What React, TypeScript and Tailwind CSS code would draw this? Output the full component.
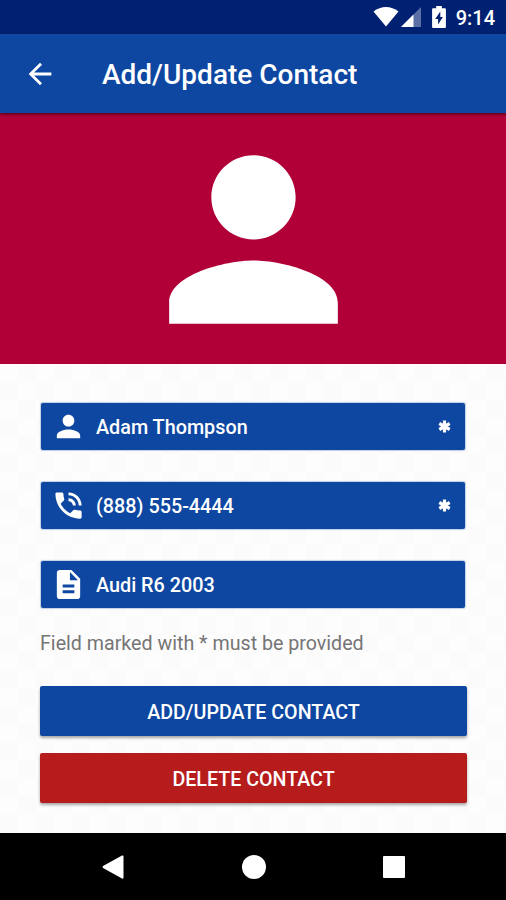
import React, { useState } from "react";
import clsx from "clsx";

const PERSON =
  "M12 12c2.21 0 4-1.79 4-4s-1.79-4-4-4-4 1.79-4 4 1.79 4 4 4zm0 2c-2.67 0-8 1.34-8 4v2h16v-2c0-2.66-5.33-4-8-4z";
const PHONE =
  "M20 15.5c-1.25 0-2.45-.2-3.57-.57-.1-.03-.21-.05-.31-.05-.26 0-.51.1-.71.29l-2.2 2.2c-2.83-1.44-5.15-3.75-6.59-6.59l2.2-2.21c.28-.26.36-.65.25-1C8.7 6.45 8.5 5.25 8.5 4c0-.55-.45-1-1-1H4c-.55 0-1 .45-1 1 0 9.39 7.61 17 17 17 .55 0 1-.45 1-1v-3.5c0-.55-.45-1-1-1zM19 12h2c0-4.97-4.03-9-9-9v2c3.87 0 7 3.13 7 7zm-4 0h2c0-2.76-2.24-5-5-5v2c1.66 0 3 1.34 3 3z";
const DOCUMENT =
  "M14 2H6c-1.1 0-1.99.9-1.99 2L4 20c0 1.1.89 2 1.99 2H18c1.1 0 2-.9 2-2V8l-6-6zm2 16H8v-2h8v2zm0-4H8v-2h8v2zm-3-5V3.5L18.5 9H13z";
const ARROW = "M20 11H7.83l5.59-5.59L12 4l-8 8 8 8 1.41-1.41L7.83 13H20v-2z";

type IconProps = { path: string; className?: string };

const Icon = ({ path, className }: IconProps) => (
  <svg viewBox="0 0 24 24" fill="currentColor" className={className}>
    <path d={path} />
  </svg>
);

const StatusBar = () => (
  <div className="flex h-[34px] items-center justify-end bg-[#002171] pr-[11px] text-white">
    <svg width="26" height="20" viewBox="0 0 26 20" fill="currentColor">
      <path d="M0.5 4.6C8 -1.4 18 -1.4 25.5 4.6L13 19.5z" />
    </svg>
    <svg width="20" height="20" viewBox="0 0 20 20" className="ml-[2px]">
      <path d="M20 0V20H0z" fill="#5a6fa6" />
      <path d="M12.5 7.5V20H0z" fill="#fff" />
    </svg>
    <svg width="14" height="22" viewBox="0 0 14 22" className="ml-[11px]">
      <path
        d="M4.2 0h5.6v2.3H13c.5 0 .9.4.9.9V21c0 .5-.4.9-.9.9H1c-.5 0-.9-.4-.9-.9V3.200c0-.5.4-.9.9-.9h3.200z"
        fill="#fff"
      />
      <path d="M8.300 5.500L3.200 13H6.100V18.600L10.900 10.900H8.300z" fill="#002171" />
    </svg>
    <span className="ml-[10px] pt-[2px] text-[20px] leading-none font-medium">9:14</span>
  </div>
);

const Header = () => (
  <header className="relative z-10 flex h-[79px] items-center bg-[#0d47a1] pl-[23px] text-white shadow-[0_1px_3px_rgba(0,0,0,0.6)]">
    <button aria-label="Back">
      <Icon path={ARROW} className="size-[34px]" />
    </button>
    <h1 className="ml-[45px] pt-[3px] text-[28px] leading-[34px] font-medium whitespace-nowrap">
      Add/Update Contact
    </h1>
  </header>
);

type FieldProps = {
  icon: string;
  value: string;
  onChange: (value: string) => void;
  required?: boolean;
};

const Field = ({ icon, value, onChange, required }: FieldProps) => (
  <label className="flex h-[47px] items-center rounded-[2px] bg-[#0d47a1] pr-[14px] pl-[9.500px] text-white shadow-[0_0_1px_1px_rgba(13,71,161,0.25)]">
    <Icon path={icon} className="size-[35px] shrink-0" />
    <input
      value={value}
      onChange={(e) => onChange(e.target.value)}
      className="ml-[10.500px] min-w-0 flex-1 bg-transparent pt-[2px] text-[19.8px] font-medium outline-none"
    />
    {required && (
      <svg
        width="13"
        height="13"
        viewBox="0 0 13 13"
        stroke="currentColor"
        strokeWidth="3.2"
      >
        <path d="M6.500 0.500V12.500M1.300 3.500L11.700 9.500M11.700 3.500L1.300 9.500" />
      </svg>
    )}
  </label>
);

type ActionProps = { label: string; danger?: boolean };

const ActionButton = ({ label, danger }: ActionProps) => (
  <button
    className={clsx(
      "h-[50px] w-full rounded-[2px] pt-[3px] text-[19.65px] font-medium text-white uppercase shadow-[0_2px_3px_rgba(0,0,0,0.35)]",
      danger ? "bg-[#b71c1c]" : "bg-[#0d47a1]"
    )}
  >
    {label}
  </button>
);

const NavigationBar = () => (
  <nav className="flex h-[67px] items-center justify-between bg-black pr-[101px] pl-[102px] text-white">
    <svg width="22" height="24" viewBox="0 0 22 24" fill="currentColor">
      <path d="M20 0.500Q21.500 0 21.500 1.500V22.500Q21.500 24 20 23.500L1 13Q0 12 1 11z" />
    </svg>
    <div className="size-6 rounded-full bg-white" />
    <div className="h-[22px] w-[22px] rounded-[1px] bg-white" />
  </nav>
);

const App = () => {
  const [name, setName] = useState("Adam Thompson");
  const [phone, setPhone] = useState("(888) 555-4444");
  const [note, setNote] = useState("Audi R6 2003");

  return (
    <div className="flex h-[900px] w-[506px] flex-col overflow-hidden font-['Roboto',sans-serif]">
      <StatusBar />
      <Header />
      <div className="flex h-[251px] shrink-0 justify-center bg-[#b00037] text-white">
        <Icon path={PERSON} className="-mt-[0.500px] size-[253px] shrink-0" />
      </div>
      <main className="flex-1 bg-[#fcfcfc] bg-[conic-gradient(#fbfbfb_25%,#fdfdfd_0_50%,#fbfbfb_0_75%,#fdfdfd_0)] bg-[length:36px_36px] px-10 pt-[39px]">
        <div className="flex flex-col gap-[32px] pr-px pl-px">
          <Field icon={PERSON} value={name} onChange={setName} required />
          <Field icon={PHONE} value={phone} onChange={setPhone} required />
          <Field icon={DOCUMENT} value={note} onChange={setNote} />
        </div>
        <p className="mt-[21px] text-[19.65px] leading-[30px] text-[#757575]">
          Field marked with * must be provided
        </p>
        <div className="mt-[27px] -mr-px flex flex-col gap-[17px]">
          <ActionButton label="Add/Update Contact" />
          <ActionButton label="Delete Contact" danger />
        </div>
      </main>
      <NavigationBar />
    </div>
  );
};

export default App;
